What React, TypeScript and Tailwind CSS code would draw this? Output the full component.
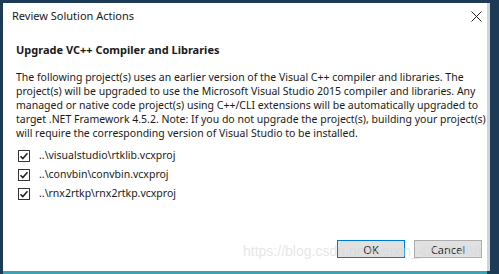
import React from 'react';

const FONT = { fontFamily: '"Noto Sans", "Open Sans", sans-serif' };

const projects = [
  '..\\visualstudio\\rtklib.vcxproj',
  '..\\convbin\\convbin.vcxproj',
  '..\\rnx2rtkp\\rnx2rtkp.vcxproj',
];

const lines = [
  'The following project(s) uses an earlier version of the Visual C++ compiler and libraries. The',
  'project(s) will be upgraded to use the Microsoft Visual Studio 2015 compiler and libraries. Any',
  'managed or native code project(s) using C++/CLI extensions will be automatically upgraded to',
  'target .NET Framework 4.5.2. Note: If you do not upgrade the project(s), building your project(s)',
  'will require the corresponding version of Visual Studio to be installed.',
];

function CheckBox() {
  return (
    <svg width="12" height="12" viewBox="0 0 12 12" className="shrink-0">
      <rect x="0.5" y="0.5" width="11" height="11" fill="#fff" stroke="#333" />
      <path d="M2.5 6.2 L4.8 8.5 L9.5 3.3" fill="none" stroke="#222" strokeWidth="1.6" />
    </svg>
  );
}

export default function App() {
  return (
    <div className="w-[499px] h-[274px] bg-[#1d3b57] flex relative overflow-hidden text-[#1a1a1a]" style={FONT}>
      <div className="mt-[3px] ml-[3px] w-[484px] h-[271px] bg-white flex flex-col">
        {/* title bar */}
        <div className="h-[27px] flex items-center justify-between pl-[9px] pr-[5px]">
          <span className="text-[11px]">Review Solution Actions</span>
          <svg width="11" height="11" viewBox="0 0 11 11">
            <path d="M0.5 0.5 L10.5 10.5 M10.5 0.5 L0.5 10.5" stroke="#222" strokeWidth="1" />
          </svg>
        </div>

        <div className="flex-1 flex flex-col pl-[13px] pr-[5px]">
          <h1 className="mt-[12px] text-[11px] font-bold leading-[16px]">Upgrade VC++ Compiler and Libraries</h1>
          <div className="mt-[12px] text-[10.5px] leading-[14px]">
            {lines.map((l) => (
              <p key={l} className="whitespace-nowrap">{l}</p>
            ))}
          </div>

          <div className="mt-[9px] flex flex-col gap-[6px] pl-[2px]">
            {projects.map((p) => (
              <div key={p} className="flex items-center gap-[9px] h-[13px]">
                <CheckBox />
                <span className="text-[10.5px]">{p}</span>
              </div>
            ))}
          </div>

          <div className="mt-auto mb-[13px] flex justify-end gap-[9px]">
            <button className="w-[68px] h-[18px] bg-[#e1e1e1] border border-[#0078d7] text-[11px] leading-none">OK</button>
            <button className="w-[68px] h-[18px] bg-[#e1e1e1] border border-[#adadad] text-[11px] leading-none">Cancel</button>
          </div>
        </div>
        <div className="h-[3px] bg-[#3aa3b4]" />
      </div>
      <div className="mt-[3px] w-[3px] h-[268px] bg-[#c9d5df]" />

      {/* watermark overlay */}
      <span
        className="absolute left-[243px] top-[241px] text-[14px] text-[#d4d8dc] opacity-60 pointer-events-none"
        style={{ fontFamily: '"Liberation Sans", Arial, sans-serif' }}
      >
        https://blog.csdn.net/weixin_42580488
      </span>
    </div>
  );
}
